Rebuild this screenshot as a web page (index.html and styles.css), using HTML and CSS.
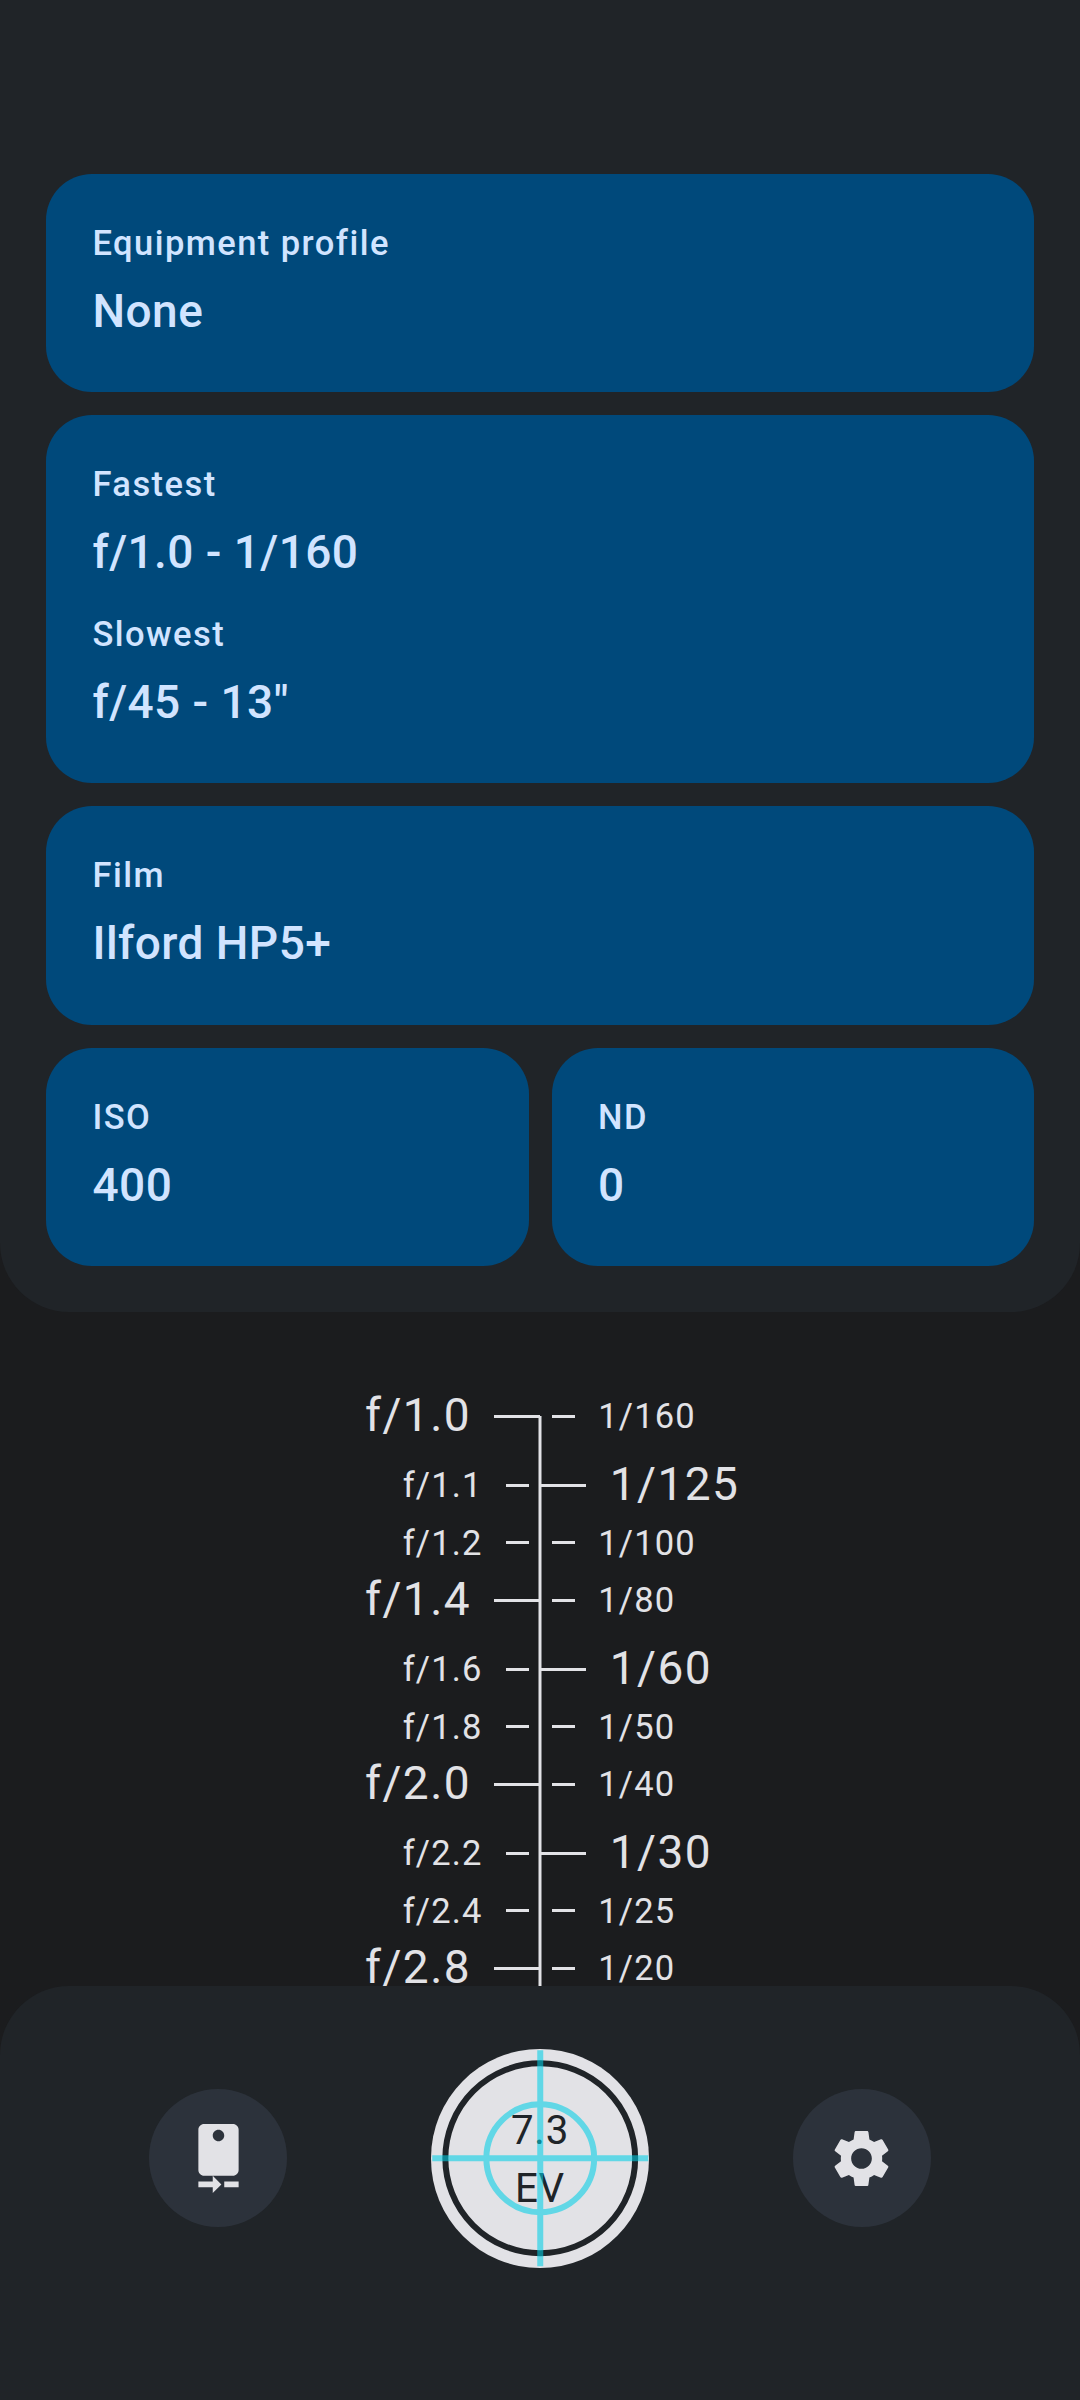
FILE: index.html
```
<!DOCTYPE html>
<html lang="en">
<head>
<meta charset="utf-8">
<title>Light meter</title>
<link rel="stylesheet" href="styles.css">
</head>
<body>
<div class="screen">
  <header class="top-panel">
    <section class="card">
      <div class="reading"><div class="label">Equipment profile</div><div class="value">None</div></div>
    </section>
    <section class="card">
      <div class="reading"><div class="label">Fastest</div><div class="value">f/1.0 - 1/160</div></div>
      <div class="reading"><div class="label">Slowest</div><div class="value">f/45 - 13"</div></div>
    </section>
    <section class="card">
      <div class="reading"><div class="label">Film</div><div class="value">Ilford HP5+</div></div>
    </section>
    <div class="card-row">
      <section class="card">
        <div class="reading"><div class="label">ISO</div><div class="value">400</div></div>
      </section>
      <section class="card">
        <div class="reading"><div class="label">ND</div><div class="value">0</div></div>
      </section>
    </div>
  </header>

  <main class="scale">
    <div class="axis"></div>
    <div class="row"><div class="side left major"><span>f/1.0</span><i></i></div><div class="side right"><i></i><span>1/160</span></div></div>
    <div class="row"><div class="side left"><span>f/1.1</span><i></i></div><div class="side right major"><i></i><span>1/125</span></div></div>
    <div class="row short"><div class="side left"><span>f/1.2</span><i></i></div><div class="side right"><i></i><span>1/100</span></div></div>
    <div class="row"><div class="side left major"><span>f/1.4</span><i></i></div><div class="side right"><i></i><span>1/80</span></div></div>
    <div class="row"><div class="side left"><span>f/1.6</span><i></i></div><div class="side right major"><i></i><span>1/60</span></div></div>
    <div class="row short"><div class="side left"><span>f/1.8</span><i></i></div><div class="side right"><i></i><span>1/50</span></div></div>
    <div class="row"><div class="side left major"><span>f/2.0</span><i></i></div><div class="side right"><i></i><span>1/40</span></div></div>
    <div class="row"><div class="side left"><span>f/2.2</span><i></i></div><div class="side right major"><i></i><span>1/30</span></div></div>
    <div class="row short"><div class="side left"><span>f/2.4</span><i></i></div><div class="side right"><i></i><span>1/25</span></div></div>
    <div class="row"><div class="side left major"><span>f/2.8</span><i></i></div><div class="side right"><i></i><span>1/20</span></div></div>
  </main>

  <footer class="bottom-panel">
    <button class="round" aria-label="Rear camera">
      <svg viewBox="0 0 24 24"><path d="M10 20H5v2h5v2l3-3-3-3v2zm4 0v2h5v-2h-5zm3-20H7C5.9 0 5 .9 5 2v14c0 1.1.9 2 2 2h10c1.1 0 2-.9 2-2V2c0-1.1-.9-2-2-2zm-5 6c-1.11 0-2-.9-2-2s.89-2 1.99-2 2 .9 2 2C14 5.1 13.1 6 12 6z"/></svg>
    </button>
    <button class="measure" aria-label="Measure">
      <span class="ev">7.3<br>EV</span>
      <svg class="target" viewBox="-109.25 -109.25 218.5 218.5">
        <circle class="ring" r="94.9"/>
        <g class="cross">
          <circle r="53.9"/>
          <path d="M-108 0H108M0-108V108"/>
        </g>
      </svg>
    </button>
    <button class="round" aria-label="Settings">
      <svg viewBox="0 0 24 24"><path d="M19.14 12.94c.04-.3.06-.61.06-.94 0-.32-.02-.64-.07-.94l2.03-1.58c.18-.14.23-.41.12-.61l-1.92-3.32c-.12-.22-.37-.29-.59-.22l-2.39.96c-.5-.38-1.03-.7-1.62-.94l-.36-2.54c-.04-.24-.24-.41-.48-.41h-3.84c-.24 0-.43.17-.47.41l-.36 2.54c-.59.24-1.13.57-1.62.94l-2.39-.96c-.22-.08-.47 0-.59.22L2.74 8.87c-.12.21-.08.47.12.61l2.03 1.58c-.05.3-.09.63-.09.94s.02.64.07.94l-2.03 1.58c-.18.14-.23.41-.12.61l1.92 3.32c.12.22.37.29.59.22l2.39-.96c.5.38 1.03.7 1.62.94l.36 2.54c.05.24.24.41.48.41h3.84c.24 0 .44-.17.47-.41l.36-2.54c.59-.24 1.13-.56 1.62-.94l2.39.96c.22.08.47 0 .59-.22l1.92-3.32c.12-.22.07-.47-.12-.61l-2.01-1.58zM12 15.6c-1.98 0-3.6-1.62-3.6-3.6s1.62-3.6 3.6-3.6 3.6 1.62 3.6 3.6-1.62 3.6-3.6 3.6z"/></svg>
    </button>
  </footer>
</div>
</body>
</html>
```
FILE: styles.css
```
* { box-sizing: border-box; }

body {
  margin: 0;
  background: #1b1c1e;
  font-family: Roboto, sans-serif;
  color: #e2e2e6;
}

.screen {
  display: flex;
  flex-direction: column;
  width: 1080px;
  height: 2400px;
  overflow: hidden;
  background: #1b1c1e;
}

.top-panel {
  flex: none;
  display: flex;
  flex-direction: column;
  gap: 23px;
  padding: 173.9px 46px 46px;
  border-radius: 0 0 69px 69px;
  background: #202428;
}

.card-row {
  display: grid;
  grid-template-columns: 1fr 1fr;
  gap: 23px;
}

.card {
  display: flex;
  flex-direction: column;
  gap: 23px;
  padding: 46px 46px 46px 46.5px;
  border-radius: 46px;
  background: #00497b;
  color: #d1e4ff;
  font-weight: 500;
}

.label {
  font-size: 34.5px;
  line-height: 46px;
  letter-spacing: 1.44px;
  margin-bottom: 11px;
}

.value {
  font-size: 46px;
  line-height: 69px;
  letter-spacing: 0.43px;
  margin-bottom: 0.5px;
}

.scale {
  position: relative;
  flex: 1;
  min-height: 0;
  padding-top: 69.6px;
}

/* Vertical line shared by both columns of stops, with softened edges */
.axis {
  position: absolute;
  left: 538px;
  top: 104px;
  bottom: 0;
  width: 4px;
  border: solid rgba(226, 226, 230, 0.5);
  border-width: 0 1px;
  background: #e2e2e6 padding-box;
}

.row {
  display: grid;
  grid-template-columns: 1fr 1fr;
  height: 69px;
}

.row.short { height: 46px; }

.side {
  display: flex;
  align-items: center;
  gap: 23px;
  padding: 0 11.5px;
  font-size: 34.5px;
  letter-spacing: 1.15px;
  white-space: nowrap;
}

.side.left { justify-content: flex-end; }

.side.right { gap: 23.75px; }

.side i {
  width: 23px;
  height: 3px;
  background: #e2e2e6;
}

.side.major {
  padding: 0;
  font-size: 46px;
  letter-spacing: 1.44px;
}

.side.major span { margin-top: -2.6px; }

.side.major i { width: 46px; }

/* The bottom panel slides over the end of the scale */
.bottom-panel {
  position: relative;
  flex: none;
  display: flex;
  justify-content: center;
  align-items: flex-start;
  gap: 143.5px;
  height: 414.25px;
  padding-top: 63.25px;
  border-radius: 69px 69px 0 0;
  background: #202428;
}

button {
  border: 0;
  padding: 0;
  font: inherit;
  border-radius: 50%;
}

.round {
  display: grid;
  place-items: center;
  width: 138px;
  height: 138px;
  margin-top: 40.25px;
  background: #2c323b;
}

.round svg {
  width: 69px;
  height: 69px;
  fill: #e2e2e6;
}

.measure {
  position: relative;
  display: grid;
  place-items: center;
  width: 218.5px;
  height: 218.5px;
  background: #e2e2e6;
  color: #202428;
}

.ev {
  margin-top: 3px;
  font-size: 40.25px;
  line-height: 57.5px;
  letter-spacing: 0.72px;
  text-align: center;
}

.target {
  position: absolute;
  inset: 0;
  width: 100%;
  height: 100%;
  fill: none;
  stroke-width: 6;
}

.ring { stroke: #202428; }

.cross {
  stroke: #00d0e6;
  opacity: 0.57;
}
```
